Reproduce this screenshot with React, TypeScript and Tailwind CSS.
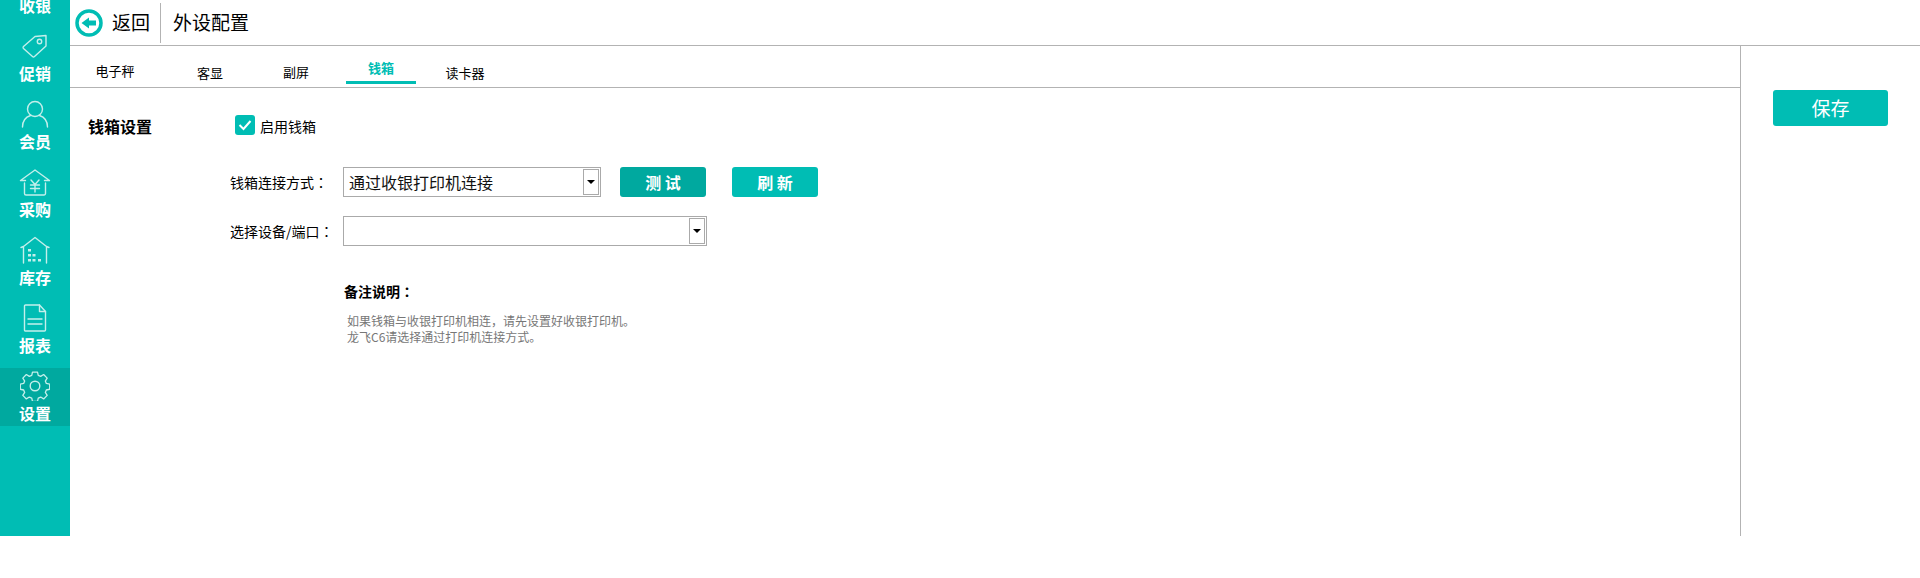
const font = "font-['Microsoft_YaHei','Noto_Sans_CJK_SC',sans-serif]";

const stroke = {
  fill: "none",
  stroke: "#c4efeb",
  strokeWidth: 1.4,
  strokeLinejoin: "round" as const,
  strokeLinecap: "round" as const,
};

function TagIcon() {
  return (
    <svg width="26" height="24" viewBox="0 0 26 24" {...stroke}>
      <path d="M1.5 12.5 13 2.5 24 1.5V12L12.5 22.5a1.5 1.5 0 0 1-2 0L1.5 14.5a1.4 1.4 0 0 1 0-2Z" />
      <circle cx="17.5" cy="7.5" r="2.2" />
    </svg>
  );
}

function UserIcon() {
  return (
    <svg width="28" height="28" viewBox="0 0 28 28" {...stroke}>
      <circle cx="14" cy="9" r="7.5" />
      <path d="M1.5 27c0-6 3.5-10 8-11.5M26.5 27c0-6-3.5-10-8-11.5" />
    </svg>
  );
}

function PurchaseIcon() {
  return (
    <svg width="32" height="28" viewBox="0 0 32 28" {...stroke}>
      <path d="M1.5 12.5 16 2l14.5 10.5H25.5M1.5 12.5h5" />
      <path d="M5.5 15v10.5A1.5 1.5 0 0 0 7 27h18a1.5 1.5 0 0 0 1.5-1.5V15" />
      <path d="M12 12 16 16.5l4-4.5M11.5 17h9M11.5 20.5h9M16 16.5v7.5" />
    </svg>
  );
}

function StockIcon() {
  return (
    <svg width="30" height="28" viewBox="0 0 30 28" {...stroke}>
      <path d="M3.5 27V10.5L15 1.5l11.5 9V27M1 11.5l2.5-1M29 11.5l-2.5-1" />
      <g fill="#c4efeb" stroke="none">
        <rect x="8" y="13" width="3" height="2.5" />
        <rect x="8" y="18" width="3" height="2.5" />
        <rect x="12.5" y="18" width="3" height="2.5" />
        <rect x="8" y="23" width="3" height="2.5" />
        <rect x="12.5" y="23" width="3" height="2.5" />
        <rect x="18" y="23" width="3" height="2.5" />
      </g>
    </svg>
  );
}

function ReportIcon() {
  return (
    <svg width="24" height="28" viewBox="0 0 24 28" {...stroke}>
      <path d="M2.5 1h14l6 6.5V26a1 1 0 0 1-1 1h-19a1 1 0 0 1-1-1V2a1 1 0 0 1 1-1Z" />
      <path d="M16.5 1v6.5h6M5 15h14M5 20h14" />
    </svg>
  );
}

function GearIcon() {
  return (
    <svg width="30" height="30" viewBox="0 0 30 30" {...stroke}>
      <circle cx="15" cy="15" r="4.8" />
      <path d="M12.3 1.5h5.4l.8 3.6 2.6 1.1 3.2-2 3.8 3.8-2 3.2 1.1 2.6 3.6.8v5.4l-3.6.8-1.1 2.6 2 3.2-3.8 3.8-3.2-2-2.6 1.1-.8 3.6h-5.4l-.8-3.6-2.6-1.1-3.2 2-3.8-3.8 2-3.2-1.1-2.6-3.6-.8v-5.4l3.6-.8 1.1-2.6-2-3.2 3.8-3.8 3.2 2 2.6-1.1Z" transform="translate(15 15) scale(.93) translate(-15 -16.5)" />
    </svg>
  );
}

const navItems = [
  { label: "促销", icon: <TagIcon /> },
  { label: "会员", icon: <UserIcon /> },
  { label: "采购", icon: <PurchaseIcon /> },
  { label: "库存", icon: <StockIcon /> },
  { label: "报表", icon: <ReportIcon /> },
  { label: "设置", icon: <GearIcon />, active: true },
];

const tabs = [
  { label: "电子秤", className: "ml-[10px] pt-[3px]" },
  { label: "客显", className: "ml-[25px] pt-[5px]" },
  { label: "副屏", className: "ml-[16px] pt-[4px]" },
  { label: "钱箱", className: "ml-[15px] font-bold text-[#00bdb4] border-b-[3px] border-[#00bdb4]" },
  { label: "读卡器", className: "ml-[14px] pt-[5px]" },
];

function Select({ value, width }: { value?: string; width: string }) {
  return (
    <div className={`${width} flex h-[30px] items-center justify-between border border-[#aaaaaa] bg-white pl-[5px] pr-[1px] text-[16px] text-[#111]`}>
      <span>{value}</span>
      <span className="flex h-[26px] w-[16px] items-center justify-center border border-[#aaaaaa]">
        <span className="h-0 w-0 border-x-[4px] border-t-[4px] border-x-transparent border-t-black" />
      </span>
    </div>
  );
}

// the colon sits mid-cell in the reference, the TC face draws it that way
function Colon() {
  return <span className="font-['Noto_Sans_CJK_TC',sans-serif]">：</span>;
}

export default function App() {
  return (
    <div className={`${font} flex h-[578px] w-[1920px] items-start overflow-hidden bg-white text-black`}>
      <aside className="h-[536px] w-[70px] shrink-0 overflow-hidden bg-[#00bdb4] text-white">
        <div className="mt-[-6px] h-[23px] text-center text-[16px] font-bold leading-[23px]">收银</div>
        <div className="flex flex-col">
          {navItems.map((item) => (
            <div
              key={item.label}
              className={`flex h-[58px] flex-col items-center justify-end pb-[1px] mt-[10px] first:mt-[11px] ${item.active ? "bg-[#00a99f]" : ""}`}
            >
              <div className="flex h-[30px] items-center">{item.icon}</div>
              <div className="text-[16px] font-bold leading-[24px]">{item.label}</div>
            </div>
          ))}
        </div>
      </aside>

      <main className="flex h-[536px] min-w-0 flex-1 flex-col">
        <header className="flex h-[46px] shrink-0 items-center border-b border-[#b3b3b3]">
          <svg className="ml-[5px]" width="28" height="28" viewBox="0 0 28 28">
            <circle cx="14" cy="14" r="12" fill="none" stroke="#00bdb4" strokeWidth="3.5" />
            <path d="M6.5 14 14 8.5V11.5H21V16.5H14V19.5Z" fill="#00bdb4" />
          </svg>
          <span className="ml-[9px] text-[19px]">返回</span>
          <div className="ml-[10px] h-[40px] w-px bg-[#b3b3b3]" />
          <span className="ml-[12px] text-[19px]">外设配置</span>
        </header>

        <div className="flex min-h-0 flex-1">
          <div className="min-w-0 flex-1">
            <nav className="flex h-[42px] items-start border-b border-[#b3b3b3] pt-[12px] text-[13px] leading-[20px]">
              {tabs.map((tab) => (
                <div key={tab.label} className={`h-[26px] w-[70px] text-center ${tab.className}`}>
                  {tab.label}
                </div>
              ))}
            </nav>

            <div className="flex pl-[18px] pt-[25px]">
              <div className="w-[147px] pt-[1px] text-[16px] font-bold leading-[24px]">钱箱设置</div>
              <div>
                <label className="flex items-center">
                  <span className="flex h-[20px] w-[20px] items-center justify-center rounded-[3px] bg-[#00bdb4]">
                    <svg width="14" height="12" viewBox="0 0 14 12" fill="none" stroke="white" strokeWidth="2">
                      <path d="M1.5 6 5.5 10 12.5 2" />
                    </svg>
                  </span>
                  <span className="ml-[5px] mt-[3px] text-[14px]">启用钱箱</span>
                </label>

                <div className="ml-[-5px] mt-[30px] flex items-center">
                  <span className="w-[113px] text-[14px] whitespace-nowrap">钱箱连接方式<Colon /></span>
                  <Select value="通过收银打印机连接" width="w-[258px]" />
                  <button className="ml-[19px] h-[30px] w-[86px] rounded-[3px] bg-[#00a99f] text-[16px] font-bold text-white">测 试</button>
                  <button className="ml-[26px] h-[30px] w-[86px] rounded-[3px] bg-[#00bdb4] text-[16px] font-bold text-white">刷 新</button>
                </div>

                <div className="ml-[-5px] mt-[19px] flex items-center">
                  <span className="w-[113px] text-[14px] whitespace-nowrap">选择设备/端口<Colon /></span>
                  <Select width="w-[364px]" />
                </div>

                <div className="ml-[109px] mt-[35px] text-[14px] font-bold leading-[20px]">备注说明<Colon /></div>
                <div className="ml-[112px] mt-[12px] text-[12px] leading-[16px] text-[#777777]">
                  <div>如果钱箱与收银打印机相连，请先设置好收银打印机。</div>
                  <div>龙飞C6请选择通过打印机连接方式。</div>
                </div>
              </div>
            </div>
          </div>

          <aside className="w-[180px] shrink-0 border-l border-[#b3b3b3] pl-[32px] pt-[44px]">
            <button className="h-[36px] w-[115px] rounded-[3px] bg-[#00bdb4] text-[19px] text-white">保存</button>
          </aside>
        </div>
      </main>
    </div>
  );
}
